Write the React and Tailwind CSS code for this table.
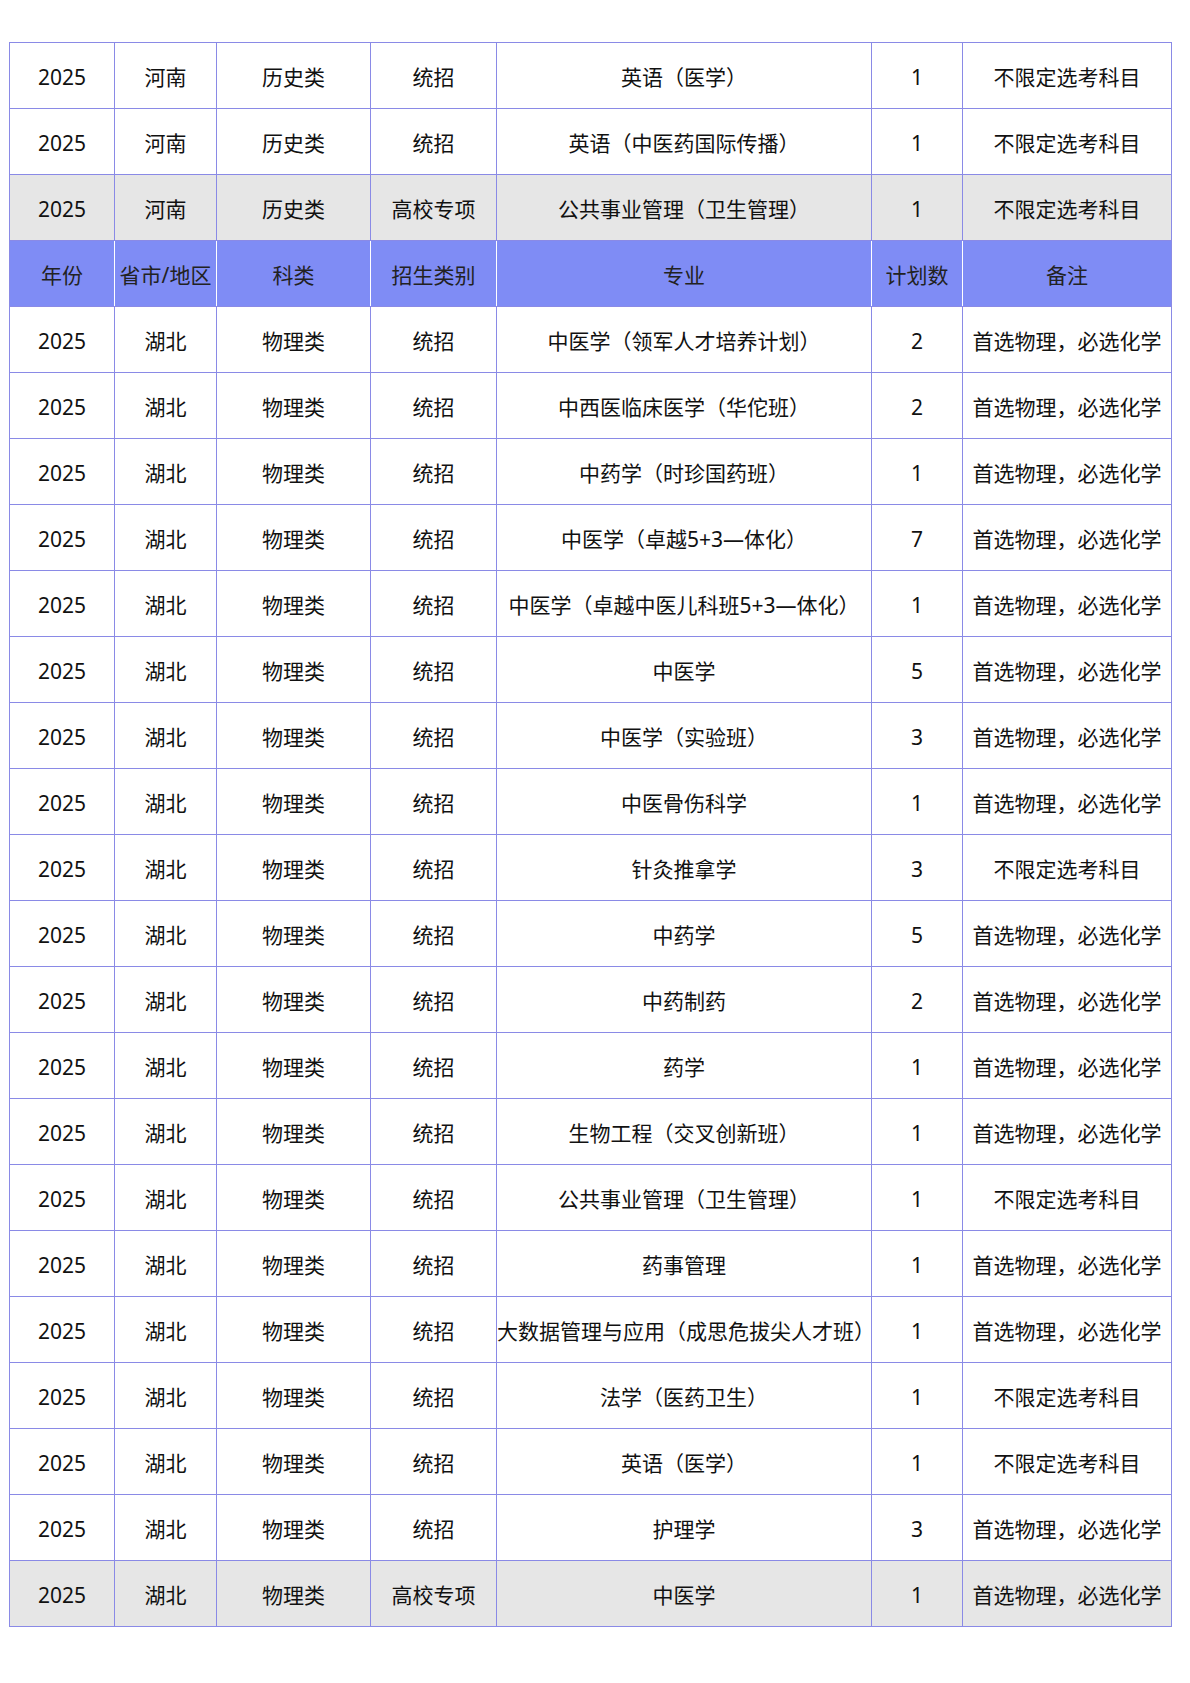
const header = ["年份", "省市/地区", "科类", "招生类别", "专业", "计划数", "备注"];

const PHY = "首选物理，必选化学";
const ANY = "不限定选考科目";

const henan = [
  ["历史类", "统招", "英语（医学）", 1, ANY],
  ["历史类", "统招", "英语（中医药国际传播）", 1, ANY],
  ["历史类", "高校专项", "公共事业管理（卫生管理）", 1, ANY, true],
];

const hubei = [
  ["物理类", "统招", "中医学（领军人才培养计划）", 2, PHY],
  ["物理类", "统招", "中西医临床医学（华佗班）", 2, PHY],
  ["物理类", "统招", "中药学（时珍国药班）", 1, PHY],
  ["物理类", "统招", "中医学（卓越5+3—体化）", 7, PHY],
  ["物理类", "统招", "中医学（卓越中医儿科班5+3—体化）", 1, PHY],
  ["物理类", "统招", "中医学", 5, PHY],
  ["物理类", "统招", "中医学（实验班）", 3, PHY],
  ["物理类", "统招", "中医骨伤科学", 1, PHY],
  ["物理类", "统招", "针灸推拿学", 3, ANY],
  ["物理类", "统招", "中药学", 5, PHY],
  ["物理类", "统招", "中药制药", 2, PHY],
  ["物理类", "统招", "药学", 1, PHY],
  ["物理类", "统招", "生物工程（交叉创新班）", 1, PHY],
  ["物理类", "统招", "公共事业管理（卫生管理）", 1, ANY],
  ["物理类", "统招", "药事管理", 1, PHY],
  ["物理类", "统招", "大数据管理与应用（成思危拔尖人才班）", 1, PHY],
  ["物理类", "统招", "法学（医药卫生）", 1, ANY],
  ["物理类", "统招", "英语（医学）", 1, ANY],
  ["物理类", "统招", "护理学", 3, PHY],
  ["物理类", "高校专项", "中医学", 1, PHY, true],
];

const Row = ({ province, item }) => {
  const [kind, type, major, plan, note, grey] = item;
  const cells = ["2025", province, kind, type, major, plan, note];
  return (
    <tr className={`h-[66px] ${grey ? "bg-[#e6e6e6]" : "bg-white"}`}>
      {cells.map((c, i) => (
        <td
          key={i}
          className="border border-[#8a8ae6] text-center align-middle whitespace-nowrap px-0 pt-[4px]"
        >
          {c}
        </td>
      ))}
    </tr>
  );
};

export default function App() {
  return (
    <div
      className="bg-white min-h-[1683px] w-[1190px] pt-[42px] pl-[9px]"
      style={{ fontFamily: '"Noto Sans", "Noto Sans CJK SC", sans-serif' }}
    >
      <table className="table-fixed border-collapse w-[1162px] text-[21px] text-[#111] leading-none">
        <colgroup>
          <col className="w-[105px]" />
          <col className="w-[102px]" />
          <col className="w-[154px]" />
          <col className="w-[126px]" />
          <col className="w-[375px]" />
          <col className="w-[91px]" />
          <col className="w-[209px]" />
        </colgroup>
        <tbody>
          {henan.map((item, i) => (
            <Row key={`h${i}`} province="河南" item={item} />
          ))}
          <tr className="h-[66px] bg-[#7f8cf5]">
            {header.map((h, i) => (
              <td
                key={i}
                className="border-x border-x-white border-y border-y-[#8a8ae6] first:border-l-[#8a8ae6] last:border-r-[#8a8ae6] text-center align-middle whitespace-nowrap px-0 pt-[4px] text-[#222]"
              >
                {h}
              </td>
            ))}
          </tr>
          {hubei.map((item, i) => (
            <Row key={`b${i}`} province="湖北" item={item} />
          ))}
        </tbody>
      </table>
    </div>
  );
}
